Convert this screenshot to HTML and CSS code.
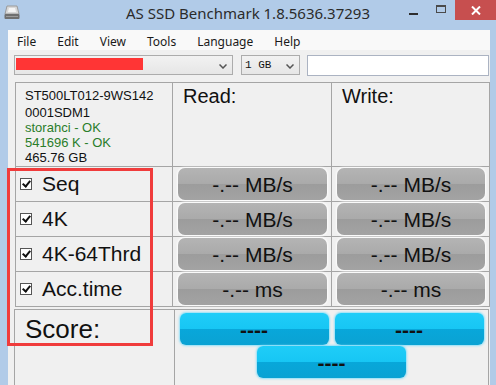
FILE: index.html
```html
<!DOCTYPE html>
<html>
<head>
<title>AS SSD Benchmark</title>
<link rel="stylesheet" href="styles.css">
</head>
<body>

<div class="window">
    <div class="titlebar">
        <svg class="app-icon" width="16" height="15" viewBox="0 0 16 15">
            <path d="M3 1 H13 L15 9 H1 Z" fill="#d8d8d8" stroke="#9a9a9a"/>
            <path d="M5 3 H11 L12 7 H4 Z" fill="#f4f4f4"/>
            <rect x="0.5" y="9" width="15" height="5" rx="1" fill="#6f6f6f"/>
            <rect x="2" y="11" width="12" height="1" fill="#9c9c9c"/>
        </svg>
        <div class="title">AS SSD Benchmark 1.8.5636.37293</div>
        <div class="controls">
            <span class="ctl"><span class="min-icon"></span></span>
            <span class="ctl"><span class="max-icon"></span></span>
            <span class="ctl close">
                <svg width="10" height="9" viewBox="0 0 10 9"><path d="M1 0.5 L9 8.5 M9 0.5 L1 8.5" stroke="#fff" stroke-width="2"/></svg>
            </span>
        </div>
    </div>

    <div class="client">
        <div class="menubar">
            <span>File</span>
            <span>Edit</span>
            <span>View</span>
            <span>Tools</span>
            <span>Language</span>
            <span>Help</span>
        </div>

        <div class="toolbar">
            <div class="combo drive-combo">
                <span class="drive-bar"></span>
                <svg class="arrow" width="8" height="5" viewBox="0 0 8 5"><path d="M0.5 0.5 L4 4 L7.5 0.5" fill="none" stroke="#555" stroke-width="1.5"/></svg>
            </div>
            <div class="combo size-combo">
                <span class="size-text">1 GB</span>
                <svg class="arrow" width="8" height="5" viewBox="0 0 8 5"><path d="M0.5 0.5 L4 4 L7.5 0.5" fill="none" stroke="#555" stroke-width="1.5"/></svg>
            </div>
            <div class="textbox"></div>
        </div>

        <div class="results">
            <div class="cell info">
                <div class="model">ST500LT012-9WS142</div>
                <div>0001SDM1</div>
                <div class="ok">storahci - OK</div>
                <div class="ok">541696 K - OK</div>
                <div>465.76 GB</div>
            </div>
            <div class="cell head">Read:</div>
            <div class="cell head">Write:</div>

            <div class="cell label"><span class="check"></span>Seq</div>
            <div class="cell slot"><div class="gray-btn">-.-- MB/s</div></div>
            <div class="cell slot"><div class="gray-btn">-.-- MB/s</div></div>

            <div class="cell label"><span class="check"></span>4K</div>
            <div class="cell slot"><div class="gray-btn">-.-- MB/s</div></div>
            <div class="cell slot"><div class="gray-btn">-.-- MB/s</div></div>

            <div class="cell label"><span class="check"></span>4K-64Thrd</div>
            <div class="cell slot"><div class="gray-btn">-.-- MB/s</div></div>
            <div class="cell slot"><div class="gray-btn">-.-- MB/s</div></div>

            <div class="cell label"><span class="check"></span>Acc.time</div>
            <div class="cell slot"><div class="gray-btn">-.-- ms</div></div>
            <div class="cell slot"><div class="gray-btn">-.-- ms</div></div>
        </div>

        <div class="score-panel">
            <div class="cell score-label">Score:</div>
            <div class="cell score-buttons">
                <div class="blue-btn">----</div>
                <div class="blue-btn">----</div>
                <div class="blue-btn">----</div>
            </div>
        </div>
    </div>

    <div class="highlight"></div>
</div>

</body>
</html>
```

FILE: styles.css
```css
body {
    margin: 0;
    padding: 0;
    background-color: #b1cbe8;
    font-family: 'Liberation Sans', Arial, sans-serif;
    overflow: hidden;
}
.window {
    position: relative;
    width: 496px;
    height: 385px;
    background-color: #b1cbe8;
}
.titlebar {
    height: 30px;
    display: grid;
    grid-template-columns: 1fr auto 1fr;
    align-items: start;
}
.app-icon {
    margin: 5px 0 0 4px;
}
.title {
    font-family: 'Noto Sans', 'Open Sans', sans-serif;
    font-size: 15px;
    line-height: 20px;
    padding-top: 3px;
    color: #2b2b2b;
}
.controls {
    display: flex;
    justify-content: flex-end;
}
.ctl {
    width: 28px;
    height: 20px;
    display: flex;
    align-items: center;
    justify-content: center;
}
.min-icon {
    width: 9px;
    height: 2px;
    margin-top: 7px;
    background-color: #2e2e2e;
}
.max-icon {
    width: 8px;
    height: 5px;
    margin-top: -2px;
    border: 1px solid #4a4a4a;
    border-top-width: 2px;
}
.ctl.close {
    width: 41px;
    background-color: #c74f4f;
}
.client {
    margin: 0 6px 0 8px;
    height: 355px;
    background-color: #f0f0f0;
}
.menubar {
    height: 20px;
    background-color: #f9f9f9;
    display: flex;
    gap: 21px;
    padding-left: 9px;
    font-family: 'Noto Sans', 'Open Sans', sans-serif;
    font-size: 12px;
    line-height: 24px;
    color: #1a1a1a;
}
.toolbar {
    height: 27px;
    padding-top: 5px;
    padding-left: 6px;
    display: flex;
    align-items: flex-start;
}
.combo {
    height: 18px;
    border: 1px solid #acacac;
    background: linear-gradient(#f2f2f2, #e6e6e6);
    display: flex;
    align-items: center;
    position: relative;
}
.drive-combo {
    width: 217px;
}
.drive-bar {
    width: 127px;
    height: 12px;
    margin: -2px 0 0 1px;
    background-color: #ff3535;
}
.arrow {
    position: absolute;
    right: 5px;
    top: 8px;
}
.size-combo {
    width: 57px;
    margin-left: 8px;
}
.size-text {
    font-family: 'Liberation Mono', monospace;
    font-size: 11px;
    margin-left: 3px;
    color: #111;
}
.textbox {
    width: 180px;
    height: 19px;
    margin-left: 7px;
    border: 1px solid #abb3c2;
    background-color: #fff;
}
.results {
    margin-left: 7px;
    width: 473px;
    display: grid;
    grid-template-columns: 156px 158px 157px;
    grid-template-rows: 83px repeat(4, 34px);
    gap: 1px;
    padding: 1px;
    background-color: #a5a5a5;
}
.cell {
    background-color: #f0f0f0;
}
.info {
    padding: 3px 0 0 9px;
    font-size: 13px;
    line-height: 15px;
    color: #111;
}
.info .model {
    line-height: 19px;
}
.info .ok {
    color: #2a7d2a;
}
.head {
    padding: 1px 0 0 10px;
    font-size: 20px;
    line-height: 24px;
    color: #111;
}
.label {
    display: flex;
    align-items: center;
    padding-left: 4px;
    font-size: 21px;
    color: #111;
}
.check {
    width: 10px;
    height: 10px;
    margin-right: 10px;
    border: 1px solid #555;
    background-color: #fff;
    position: relative;
}
.check::after {
    content: "";
    position: absolute;
    left: 3px;
    top: 0px;
    width: 3px;
    height: 6px;
    border: solid #111;
    border-width: 0 2px 2px 0;
    transform: rotate(40deg);
}
.slot {
    padding: 1px 4px 1px 5px;
}
.gray-btn {
    height: 32px;
    border-radius: 7px;
    background: linear-gradient(#b4b4b4 0%, #aaaaaa 50%, #9c9c9c 50%, #a3a3a3 100%);
    box-shadow: 0 0 2px 1px rgba(255, 255, 255, 0.9);
    text-align: center;
    font-size: 21px;
    line-height: 33px;
    color: #111;
}
.score-panel {
    margin: 2px 0 0 6px;
    width: 473px;
    display: grid;
    grid-template-columns: 159px 313px;
    grid-template-rows: 80px;
    gap: 1px;
    padding: 1px 1px 0 1px;
    background-color: #a5a5a5;
}
.score-label {
    padding: 4px 0 0 10px;
    font-size: 26px;
    line-height: 30px;
    color: #111;
}
.score-buttons {
    display: flex;
    flex-wrap: wrap;
    justify-content: center;
    align-content: flex-start;
    gap: 1px 6px;
    padding-top: 3px;
}
.blue-btn {
    width: 149px;
    height: 32px;
    border-radius: 6px;
    background: linear-gradient(#1fcdf8 0%, #17c6f4 50%, #08a7da 50%, #0aa2d3 100%);
    box-shadow: 0 0 2px 1px rgba(120, 220, 250, 0.8);
    text-align: center;
    font-size: 21px;
    font-weight: bold;
    line-height: 33px;
    color: #111;
}
.highlight {
    position: absolute;
    left: 7px;
    top: 168px;
    width: 140px;
    height: 172px;
    border: 3px solid #f03c3c;
}
```
